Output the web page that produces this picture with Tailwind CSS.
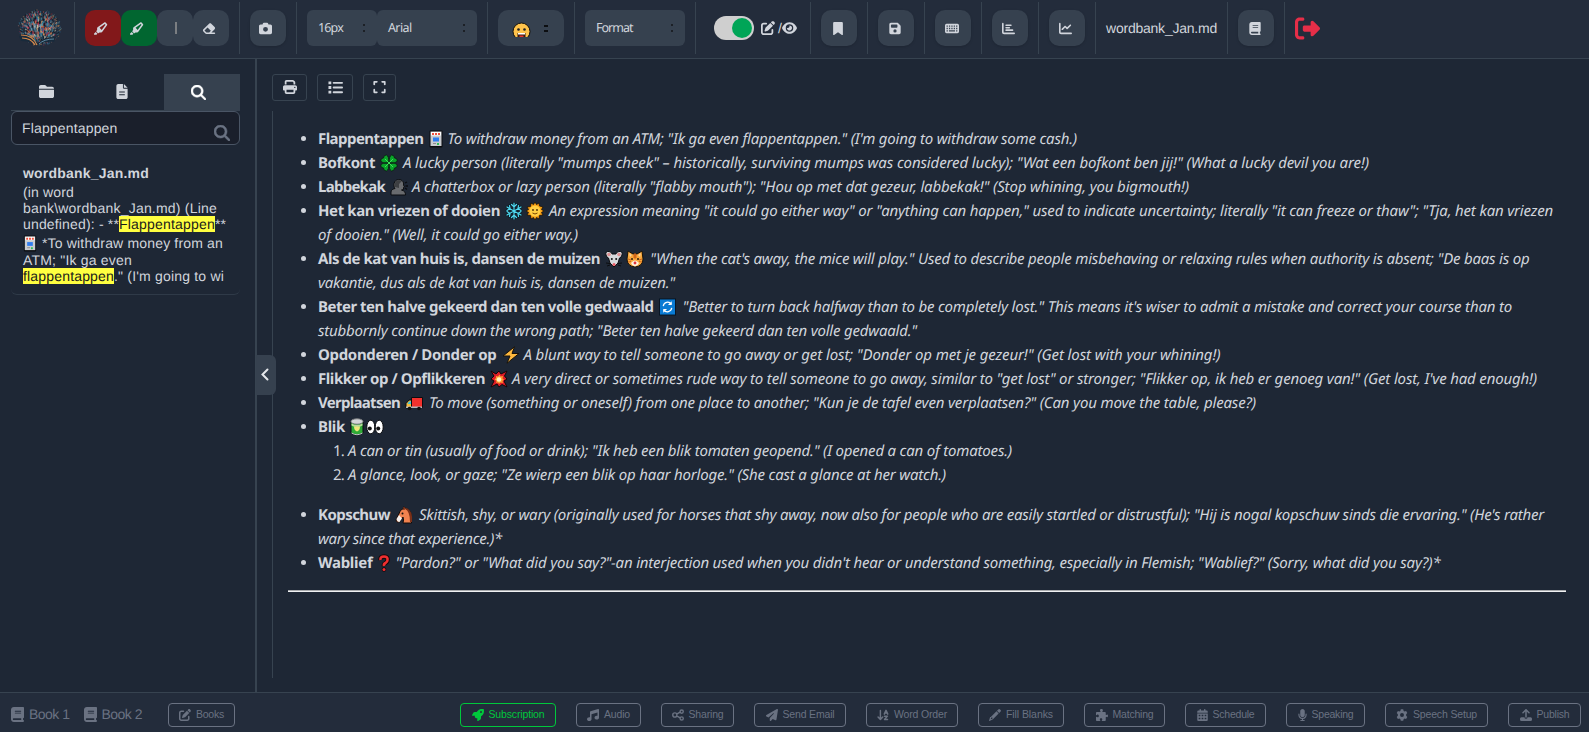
<!DOCTYPE html>
<html lang="en">
<head>
<meta charset="utf-8">
<title>wordbank_Jan.md</title>
<script src="https://cdn.jsdelivr.net/npm/@tailwindcss/browser@4"></script>
</head>
<body class="w-[1589px] h-[732px] overflow-hidden bg-[#1e2735] text-[#d1d5dc] font-['Liberation_Sans',sans-serif] [text-rendering:geometricPrecision]">
<svg class="hidden">
<symbol id="highlighter" viewBox="0 0 576 512"><path d="M315 315l158.4-215L444.1 70.6 229 229 315 315zm-187 5l0-71.7c0-15.3 7.2-29.6 19.5-38.6L420.6 8.4C428 2.9 437 0 446.2 0c11.4 0 22.4 4.5 30.5 12.6l54.8 54.8c8.1 8.1 12.6 19 12.6 30.5c0 9.2-2.9 18.2-8.4 25.6L334.4 396.5c-9 12.3-23.4 19.5-38.6 19.5H224l-25.4 25.4c-12.5 12.5-32.8 12.5-45.3 0l-50.7-50.7c-12.5-12.5-12.5-32.8 0-45.3L128 320zM7 466.3l63-63 70.6 70.6-31 31c-4.5 4.5-10.6 7-17 7H24c-13.3 0-24-10.7-24-24v-4.7c0-6.4 2.5-12.5 7-17z"/></symbol>
<symbol id="eraser" viewBox="0 0 576 512"><path d="M290.7 57.4L57.4 290.7c-25 25-25 65.5 0 90.5l80 80c12 12 28.3 18.7 45.3 18.7H512c17.7 0 32-14.3 32-32s-14.3-32-32-32H387.9L518.6 285.3c25-25 25-65.5 0-90.5L381.3 57.4c-25-25-65.5-25-90.5 0zM297.4 416H182.6l-80-80L227.3 211.3 364.7 348.7 297.4 416z"/></symbol>
<symbol id="camera" viewBox="0 0 512 512"><path d="M149.1 64.8L138.7 96H64C28.7 96 0 124.7 0 160V416c0 35.3 28.7 64 64 64H448c35.3 0 64-28.7 64-64V160c0-35.3-28.7-64-64-64H373.3L362.9 64.8C356.4 45.2 338.1 32 317.4 32H194.6c-20.7 0-39 13.2-45.5 32.8zM256 192a96 96 0 1 1 0 192 96 96 0 1 1 0-192z"/></symbol>
<symbol id="bookmark" viewBox="0 0 384 512"><path d="M0 48V487.7C0 501.1 10.9 512 24.3 512c5 0 9.9-1.5 14-4.4L192 400 345.7 507.6c4.1 2.9 9 4.4 14 4.4c13.4 0 24.3-10.9 24.3-24.3V48c0-26.5-21.5-48-48-48H48C21.5 0 0 21.5 0 48z"/></symbol>
<symbol id="floppy" viewBox="0 0 448 512"><path d="M64 32C28.7 32 0 60.7 0 96V416c0 35.3 28.7 64 64 64H384c35.3 0 64-28.7 64-64V173.3c0-17-6.7-33.3-18.7-45.3L352 50.7C340 38.7 323.7 32 306.7 32H64zm0 96c0-17.7 14.3-32 32-32H288c17.7 0 32 14.3 32 32v64c0 17.7-14.3 32-32 32H96c-17.7 0-32-14.3-32-32V128zM224 288a64 64 0 1 1 0 128 64 64 0 1 1 0-128z"/></symbol>
<symbol id="keyboard" viewBox="0 0 576 512"><path fill-rule="evenodd" d="M64 64H512a64 64 0 0 1 64 64V384a64 64 0 0 1-64 64H64a64 64 0 0 1-64-64V128a64 64 0 0 1 64-64zM64 128h52v52H64zM162 128h52v52h-52zM260 128h52v52h-52zM358 128h52v52h-52zM456 128h52v52h-52zM64 230h52v52H64zM162 230h52v52h-52zM260 230h52v52h-52zM358 230h52v52h-52zM456 230h52v52h-52zM64 332h52v52H64zM162 332h248v52H162zM456 332h52v52h-52z"/></symbol>
<symbol id="bars" viewBox="0 0 512 512"><path d="M32 32c17.7 0 32 14.3 32 32V400c0 8.800 7.200 16 16 16H480c17.700 0 32 14.300 32 32s-14.300 32-32 32H80c-44.200 0-80-35.800-80-80V64C0 46.300 14.300 32 32 32zm96 96c0-17.700 14.300-32 32-32l192 0c17.700 0 32 14.300 32 32s-14.300 32-32 32H160c-17.700 0-32-14.300-32-32zm32 64H288c17.700 0 32 14.300 32 32s-14.300 32-32 32H160c-17.700 0-32-14.300-32-32s14.300-32 32-32zm0 96H416c17.700 0 32 14.300 32 32s-14.300 32-32 32H160c-17.700 0-32-14.300-32-32s14.300-32 32-32z"/></symbol>
<symbol id="line" viewBox="0 0 512 512"><path d="M64 64c0-17.700-14.300-32-32-32S0 46.300 0 64V400c0 44.200 35.800 80 80 80H480c17.700 0 32-14.300 32-32s-14.300-32-32-32H80c-8.800 0-16-7.200-16-16V64zm406.600 86.600c12.500-12.500 12.500-32.800 0-45.300s-32.800-12.500-45.300 0L320 210.700l-57.400-57.400c-12.500-12.500-32.800-12.500-45.300 0l-112 112c-12.500 12.500-12.500 32.800 0 45.300s32.800 12.500 45.300 0L240 221.300l57.400 57.400c12.500 12.500 32.800 12.500 45.300 0l128-128z"/></symbol>
<symbol id="book" viewBox="0 0 448 512"><path d="M96 0C43 0 0 43 0 96V416c0 53 43 96 96 96H416c17.700 0 32-14.300 32-32s-14.300-32-32-32V384c17.700 0 32-14.300 32-32V32c0-17.700-14.300-32-32-32H96zm0 384H352v64H96c-17.700 0-32-14.300-32-32s14.300-32 32-32zm32-240c0-8.800 7.200-16 16-16H336c8.800 0 16 7.200 16 16s-7.200 16-16 16H144c-8.800 0-16-7.200-16-16zm16 48H336c8.800 0 16 7.200 16 16s-7.200 16-16 16H144c-8.800 0-16-7.200-16-16s7.200-16 16-16z"/></symbol>
<symbol id="exit" viewBox="0 0 512 512"><path d="M377.900 105.900L500.700 228.700c7.200 7.200 11.300 17.100 11.300 27.300s-4.100 20.100-11.300 27.300L377.900 406.100c-6.400 6.400-15 9.900-24 9.900c-18.700 0-33.900-15.200-33.900-33.900l0-62.100-128 0c-17.700 0-32-14.300-32-32l0-64c0-17.700 14.300-32 32-32l128 0 0-62.100c0-18.700 15.200-33.900 33.900-33.900c9 0 17.600 3.600 24 9.900zM160 96L96 96c-17.700 0-32 14.300-32 32l0 256c0 17.700 14.300 32 32 32l64 0c17.700 0 32 14.300 32 32s-14.300 32-32 32l-64 0c-53 0-96-43-96-96L0 128C0 75 43 32 96 32l64 0c17.700 0 32 14.300 32 32s-14.300 32-32 32z"/></symbol>
<symbol id="edit" viewBox="0 0 512 512"><path d="M471.600 21.700c-21.900-21.900-57.300-21.900-79.200 0L362.300 51.700l97.900 97.900 30.100-30.100c21.900-21.900 21.900-57.300 0-79.200L471.600 21.700zm-299.200 220c-6.100 6.100-10.800 13.600-13.500 21.900l-29.600 88.800c-2.900 8.600-.6 18.100 5.800 24.600s15.900 8.700 24.600 5.800l88.800-29.600c8.200-2.700 15.700-7.400 21.900-13.500L437.700 172.300 339.700 74.300 172.400 241.700zM96 64C43 64 0 107 0 160V416c0 53 43 96 96 96H352c53 0 96-43 96-96V320c0-17.700-14.300-32-32-32s-32 14.300-32 32v96c0 17.700-14.300 32-32 32H96c-17.700 0-32-14.300-32-32V160c0-17.700 14.300-32 32-32h96c17.700 0 32-14.300 32-32s-14.300-32-32-32H96z"/></symbol>
<symbol id="eye" viewBox="0 0 576 512"><path d="M288 32c-80.800 0-145.500 36.800-192.600 80.600C48.600 156 17.300 208 2.500 243.700c-3.300 7.900-3.300 16.700 0 24.600C17.300 304 48.600 356 95.400 399.400C142.500 443.200 207.200 480 288 480s145.500-36.800 192.600-80.600c46.800-43.500 78.100-95.400 93-131.100c3.300-7.900 3.300-16.700 0-24.600c-14.900-35.700-46.200-87.700-93-131.100C433.500 68.800 368.800 32 288 32zM144 256a144 144 0 1 1 288 0 144 144 0 1 1 -288 0zm144-64c0 35.300-28.700 64-64 64c-7.100 0-13.900-1.200-20.300-3.300c-5.500-1.800-11.900 1.600-11.700 7.400c.3 6.900 1.300 13.800 3.200 20.700c13.700 51.200 66.400 81.600 117.600 67.900s81.600-66.400 67.900-117.600c-11.100-41.500-47.800-69.400-88.600-71.100c-5.800-.2-9.200 6.100-7.400 11.700c2.100 6.400 3.300 13.200 3.300 20.300z"/></symbol>
<symbol id="folder" viewBox="0 0 512 512"><path d="M448 480H64c-35.300 0-64-28.700-64-64V192H512V416c0 35.300-28.700 64-64 64zm64-320H0V96C0 60.700 28.700 32 64 32H192c20.100 0 39.100 9.500 51.200 25.600l19.200 25.600c6 8.100 15.500 12.800 25.600 12.800H448c35.300 0 64 28.700 64 64z"/></symbol>
<symbol id="file" viewBox="0 0 384 512"><path fill-rule="evenodd" d="M64 0C28.700 0 0 28.700 0 64V448c0 35.300 28.700 64 64 64H320c35.300 0 64-28.700 64-64V160H256c-17.700 0-32-14.300-32-32V0H64zM256 0V128H384L256 0zM96 256H288v36H96zM96 346H288v36H96z"/></symbol>
<symbol id="search" viewBox="0 0 512 512"><path stroke="currentColor" stroke-width="18" d="M416 208c0 45.900-14.900 88.300-40 122.700L502.600 457.400c12.500 12.500 12.500 32.800 0 45.300s-32.800 12.500-45.300 0L330.700 376c-34.400 25.200-76.800 40-122.700 40C93.100 416 0 322.900 0 208S93.100 0 208 0S416 93.100 416 208zM208 352a144 144 0 1 0 0-288 144 144 0 1 0 0 288z"/></symbol>
<symbol id="print" viewBox="0 0 512 512"><path d="M128 0C92.700 0 64 28.700 64 64v96h64V64H354.700L384 93.300V160h64V93.300c0-17-6.700-33.300-18.700-45.300L400 18.700C388 6.700 371.700 0 354.700 0H128zM384 352v96H128V352H384zm64 32h32c17.700 0 32-14.300 32-32V256c0-35.300-28.700-64-64-64H64c-35.300 0-64 28.700-64 64v96c0 17.700 14.300 32 32 32H64v64c0 35.300 28.700 64 64 64H384c35.300 0 64-28.700 64-64V384zM432 248a24 24 0 1 1 0 48 24 24 0 1 1 0-48z"/></symbol>
<symbol id="list" viewBox="0 0 512 512"><path d="M16 48h96v96H16zM16 208h96v96H16zM16 368h96v96H16zM192 64H480a32 32 0 0 1 0 64H192a32 32 0 0 1 0-64zM192 224H480a32 32 0 0 1 0 64H192a32 32 0 0 1 0-64zM192 384H480a32 32 0 0 1 0 64H192a32 32 0 0 1 0-64z"/></symbol>
<symbol id="expand" viewBox="0 0 448 512"><path d="M32 32C14.300 32 0 46.300 0 64v96c0 17.700 14.300 32 32 32s32-14.300 32-32V96h64c17.700 0 32-14.300 32-32s-14.300-32-32-32H32zM64 352c0-17.700-14.300-32-32-32s-32 14.300-32 32v96c0 17.700 14.300 32 32 32h96c17.700 0 32-14.300 32-32s-14.300-32-32-32H64V352zM320 32c-17.700 0-32 14.300-32 32s14.300 32 32 32h64v64c0 17.700 14.300 32 32 32s32-14.300 32-32V64c0-17.700-14.300-32-32-32H320zM448 352c0-17.700-14.300-32-32-32s-32 14.300-32 32v64H320c-17.700 0-32 14.300-32 32s14.300 32 32 32h96c17.700 0 32-14.300 32-32V352z"/></symbol>
<symbol id="rocket" viewBox="0 0 512 512"><path d="M156.600 384.900L125.700 354c-8.500-8.500-11.500-20.800-7.700-32.200c3-8.900 7-20.500 11.800-33.800L24 288c-8.600 0-16.600-4.600-20.900-12.100s-4.200-16.700 .2-24.100l52.500-88.500c13-21.900 36.500-35.300 61.900-35.300l82.300 0c2.400-4 4.800-7.700 7.200-11.300C289.100-4.100 411.100-8.100 483.900 5.300c11.600 2.100 20.600 11.200 22.800 22.800c13.400 72.900 9.300 194.800-111.400 276.700c-3.500 2.400-7.300 4.800-11.300 7.200v82.300c0 25.400-13.400 49-35.300 61.900l-88.500 52.500c-7.400 4.400-16.600 4.500-24.100 .2s-12.100-12.200-12.100-20.900V380.800c-14.100 4.900-26.400 8.900-35.700 11.900c-11.200 3.600-23.400 .5-31.800-7.800zM384 168a40 40 0 1 0 0-80 40 40 0 1 0 0 80z"/></symbol>
<symbol id="music" viewBox="0 0 512 512"><path d="M499.100 6.300c8.100 6 12.900 15.600 12.900 25.700V368c0 44.200-43 80-96 80s-96-35.800-96-80s43-80 96-80c11.200 0 22 1.600 32 4.600V147L192 223.800V432c0 44.200-43 80-96 80s-96-35.800-96-80s43-80 96-80c11.200 0 22 1.600 32 4.600V128c0-14.100 9.300-26.600 22.800-30.700l320-96c9.700-2.900 20.200-1.100 28.300 5z"/></symbol>
<symbol id="share" viewBox="0 0 512 512"><path fill="none" stroke="currentColor" stroke-width="60" d="M200 220L345 130M200 292L345 382M32 256a90 90 0 1 0 180 0a90 90 0 1 0-180 0M345 110a68 68 0 1 0 136 0a68 68 0 1 0-136 0M345 402a68 68 0 1 0 136 0a68 68 0 1 0-136 0"/></symbol>
<symbol id="plane" viewBox="0 0 512 512"><path d="M498.100 5.600c10.100 7 15.400 19.100 13.500 31.200l-64 416c-1.500 9.700-7.400 18.200-16 23s-18.900 5.400-28 1.600L284 427.700l-68.500 74.100c-8.900 9.700-22.900 12.900-35.200 8.100S160 493.200 160 480V396.400c0-4 1.500-7.800 4.200-10.700L331.800 202.800c5.800-6.300 5.600-16-.4-22s-15.700-6.400-22-.7L106 360.800 17.700 316.600C7.100 311.300 .3 300.700 0 288.900s5.900-22.800 16.100-28.700l448-256c10.700-6.100 23.900-5.500 34 1.400z"/></symbol>
<symbol id="sort" viewBox="0 0 512 512"><path fill="none" stroke="currentColor" stroke-width="62" stroke-linecap="round" stroke-linejoin="round" d="M145 60V450M45 345L145 450L245 345M310 220L385 55L460 220M340 170H430M320 305H445L320 450H450"/></symbol>
<symbol id="pencil" viewBox="0 0 512 512"><path d="M410 13a48 48 0 0 1 60 6l24 24a48 48 0 0 1 0 68l-60 60L341 78zM318 101L411 194L190 415L170 435L20 508Q0 512 4 490L48 345L78 341zM100 365L70 440L145 412V365z"/></symbol>
<symbol id="puzzle" viewBox="0 0 512 512"><path d="M192 105c0-16-22-25-22-52C170 22 198 0 232 0s62 22 62 53c0 27-22 36-22 52 0 13 10 23 23 23h89c18 0 32 14 32 32v74c0 13 10 23 23 23 16 0 22-22 40-22 20 0 33 26 33 57s-13 60-33 60c-18 0-24-22-40-22-13 0-23 10-23 23v127c0 18-14 32-32 32H270c-13 0-23-10-23-23 0-16 24-24 24-48 0-28-25-49-55-49s-56 21-56 49c0 24 24 32 24 48 0 13-10 23-23 23H32c-18 0-32-14-32-32V352c0-13 10-23 23-23 16 0 24 24 48 24 28 0 49-27 49-57s-21-57-49-57c-24 0-32 24-48 24-13 0-23-10-23-23v-80c0-18 14-32 32-32h137c13 0 23-10 23-23z"/></symbol>
<symbol id="calendar" viewBox="0 0 448 512"><path fill-rule="evenodd" d="M96 32a32 32 0 0 1 64 0V64H288V32a32 32 0 0 1 64 0V64h48a48 48 0 0 1 48 48v48H0V112a48 48 0 0 1 48-48H96zM0 192H448V464a48 48 0 0 1-48 48H48a48 48 0 0 1-48-48zM60 245h72v60H60zM188 245h72v60h-72zM316 245h72v60h-72zM60 375h72v60H60zM188 375h72v60h-72zM316 375h72v60h-72z"/></symbol>
<symbol id="mic" viewBox="0 0 384 512"><path d="M192 0C139 0 96 43 96 96V256c0 53 43 96 96 96s96-43 96-96V96c0-53-43-96-96-96zM64 216c0-13.300-10.700-24-24-24s-24 10.700-24 24v40c0 89.100 66.200 162.700 152 174.400V464H120c-13.300 0-24 10.700-24 24s10.700 24 24 24H264c13.300 0 24-10.700 24-24s-10.700-24-24-24H216V430.400c85.800-11.700 152-85.300 152-174.400V216c0-13.300-10.700-24-24-24s-24 10.700-24 24v40c0 70.700-57.300 128-128 128s-128-57.300-128-128V216z"/></symbol>
<symbol id="gear" viewBox="0 0 512 512"><path fill-rule="evenodd" d="M205 12h102l18 68 38 22 68-19 51 89-49 50v68l49 50-51 89-68-19-38 22-18 68H205l-18-68-38-22-68 19-51-89 49-50v-68l-49-50 51-89 68 19 38-22zM256 172a84 84 0 1 0 0 168a84 84 0 1 0 0-168z"/></symbol>
<symbol id="upload" viewBox="0 0 512 512"><path d="M288 109V336a32 32 0 0 1-64 0V109l-73 74a32 32 0 0 1-46-46L233 9a32 32 0 0 1 46 0L407 137a32 32 0 0 1-46 46zM64 352H192a64 64 0 0 0 128 0H448a64 64 0 0 1 64 64v32a64 64 0 0 1-64 64H64a64 64 0 0 1-64-64v-32a64 64 0 0 1 64-64z"/></symbol>
<symbol id="atm" viewBox="0 0 14 18"><rect x=".5" y=".5" width="13" height="17" rx="1" fill="#0b0d10"/><rect x="1.500" y="1.500" width="11" height="14.500" fill="#c9ccd0"/><rect x="2" y="2" width="10" height="3.500" fill="#fff"/><path d="M3 3h2v2H3zM6 3h2v2H6zM9 3h2v2H9z" fill="#f0503c"/><rect x="4" y="7.500" width="6" height="4" fill="#2f7df0"/><path d="M4 13h3v1H4z" fill="#8a8a90"/><path d="M8 13h2v2H8z" fill="#2ebd59"/></symbol>
<symbol id="clover" viewBox="0 0 18 18"><g fill="#0aa329" stroke="#0b1511" stroke-width=".8"><path d="M9 9Q3 10 1 7.500Q0 4.500 3.500 4Q3.500 1 6.500 1Q9 2 9 9zM9 9Q15 10 17 7.500Q18 4.500 14.500 4Q14.500 1 11.500 1Q9 2 9 9zM9 9Q3 8 1 10.500Q0 13.500 3.500 14Q3.500 17 6.500 17Q9 16 9 9zM9 9Q15 8 17 10.500Q18 13.500 14.500 14Q14.500 17 11.500 17Q9 16 9 9z"/></g><path d="M5 5l8 8M13 5L5 13" stroke="#3fe05a" stroke-width="1"/></symbol>
<symbol id="speak" viewBox="0 0 18 18"><path d="M1 17v-3c0-2 2-3 4-3.500C3 8 3.500 2 8.500 1.500c4 0 5.500 3 5 5.500l1 2-1 .5v2l-2 .5c3 1 4 2 4 5z" fill="#696b6e" stroke="#0b0d10"/><path d="M5 9C4 5 6 2 9 2L12 3 9 6v4z" fill="#3d3f42"/><path d="M15 5l2-1M15.500 8H18M15 10l2 1.500" stroke="#0b0d10" stroke-width="1.300"/></symbol>
<symbol id="snow" viewBox="0 0 18 18"><g fill="none" stroke-linecap="round"><path d="M9 1v16M2 5l14 8M16 5L2 13M6.500 2.500L9 5l2.500-2.500M6.500 15.500L9 13l2.500 2.500M2 8.500l3-2-.5-3M16 8.500l-3-2 .5-3M2 9.500l3 2-.5 3M16 9.500l-3 2 .5 3" stroke="#0b1c26" stroke-width="2.600"/><path d="M9 1v16M2 5l14 8M16 5L2 13M6.500 2.500L9 5l2.500-2.500M6.500 15.500L9 13l2.500 2.500M2 8.500l3-2-.5-3M16 8.500l-3-2 .5-3M2 9.500l3 2-.5 3M16 9.500l-3 2 .5 3" stroke="#50d8f0" stroke-width="1.200"/></g></symbol>
<symbol id="sun" viewBox="0 0 18 18"><path d="M9 0l1.500 2.500L13 1l.5 3L17 5l-1.500 2.500L18 9l-2.500 1.500L17 13l-3.500.5L13 17l-2.500-1.500L9 18l-1.500-2.500L5 17l-.5-3.500L1 13l1.500-2.500L0 9l2.500-1.500L1 5l3.500-.5L5 1l2.500 1.500z" fill="#f59c14" stroke="#17120a" stroke-width=".8"/><circle cx="9" cy="9" r="5.500" fill="#ffcf43"/><circle cx="7" cy="8" r=".9" fill="#4a2b00"/><circle cx="11" cy="8" r=".9" fill="#4a2b00"/><path d="M6.500 11q2.500 2 5 0" stroke="#7a4500" fill="none"/></symbol>
<symbol id="mouse" viewBox="0 0 18 18"><path d="M1 5Q0 1 4 1.500Q7 2 7 4h4Q11 2 14 1.500Q18 1 17 5Q16 8 14.500 8L13 13l-4 4-4-4L3.500 8Q2 8 1 5z" fill="#d7d9dc" stroke="#0b0d10"/><circle cx="4" cy="4.500" r="1.800" fill="#dd8f91"/><circle cx="14" cy="4.500" r="1.800" fill="#dd8f91"/><circle cx="6.800" cy="9" r="1" fill="#111"/><circle cx="11.200" cy="9" r="1" fill="#111"/><circle cx="9" cy="14.500" r="1.500" fill="#e85a64"/><path d="M1 13l4 .5M2 16l3-1M17 13l-4 .5M16 16l-3-1" stroke="#0b0d10"/></symbol>
<symbol id="cat" viewBox="0 0 18 18"><path d="M2 1l5 3h4l5-3 1 8q0 7-8 8Q1 16 1 9z" fill="#f9a83c" stroke="#17120a"/><path d="M3 3l3 2-2 2zM15 3l-3 2 2 2z" fill="#f9d29a"/><path d="M8 4h2v4H8zM2 9l3 1M2 12l3-.5M16 9l-3 1M16 12l-3-.5" stroke="#d0661a" fill="#d0661a"/><path d="M5 13q4-5 8 0-1 3-4 3.500Q6 16 5 13z" fill="#fff3df"/><circle cx="6" cy="9" r="1" fill="#2b1b0a"/><circle cx="12" cy="9" r="1" fill="#2b1b0a"/><circle cx="9" cy="13" r="1.400" fill="#e0353c"/></symbol>
<symbol id="cycle" viewBox="0 0 18 18"><rect x=".5" y=".5" width="17" height="17" fill="#0a7bd4" stroke="#07131f"/><path d="M4.500 8a4.700 4.700 0 0 1 8.500-2M13.500 10a4.700 4.700 0 0 1-8.500 2" fill="none" stroke="#fff" stroke-width="1.300"/><path d="M13.500 3v4h-4zM4.500 15v-4h4z" fill="#fff"/></symbol>
<symbol id="bolt" viewBox="0 0 18 18"><path d="M12.500 .8L1 10H8l-3 7.200L17 7.500H10z" fill="#fdb73e" stroke="#17120a"/></symbol>
<symbol id="boom" viewBox="0 0 18 18"><path d="M1 1l5 3 3-3 2 3 6-3-2.500 5L17 9l-3 2 3 6-5-2.500L9 17l-2-3-6 3 3-6-3-2 3-3z" fill="#e01d27" stroke="#120608"/><path d="M6 6l2 .5 1.500-2L10.500 6.500l2.500-.5-.5 2.500 1.500 1-1.500 1.500.5 2-2.500-.5L9 14l-1-1.500-2 .5.5-2-2-1.500L6 8z" fill="#ff9f31"/><circle cx="9" cy="9.500" r="2.300" fill="#fff4c4"/></symbol>
<symbol id="truck" viewBox="0 0 18 18"><path d="M6.500 3.500h11v10h-11z" fill="#f2312d" stroke="#0b0d10"/><path d="M6.500 6H4L1 9.500V14h5.500z" fill="#f6b73c" stroke="#0b0d10"/><path d="M4 7.500H6V10H2.500z" fill="#3bc6de"/><path d="M1 12.500h16V14H1z" fill="#b4b7ba"/><circle cx="4.500" cy="14.500" r="1.800" fill="#111"/><circle cx="14" cy="14.500" r="1.800" fill="#111"/></symbol>
<symbol id="can" viewBox="0 0 14 18"><path d="M1 3v12q6 4 12 0V3z" fill="#2faa36" stroke="#0b0d10"/><ellipse cx="7" cy="3.500" rx="6" ry="2.700" fill="#d4d6d8" stroke="#77797c"/><path d="M1.500 5.500q5.500 3 11 0v2q-5.500 3-11 0z" fill="#b8dc9b"/><path d="M4 8.500h6q0 4-3 5-3-1-3-5z" fill="#f0e77a"/><path d="M1.500 15q5.500 3.500 11 0" stroke="#c2c5c8" fill="none"/></symbol>
<symbol id="eyes" viewBox="0 0 18 18"><ellipse cx="4.800" cy="9" rx="4" ry="6.800" fill="#fff" stroke="#0b0d10"/><ellipse cx="13.200" cy="9" rx="4" ry="6.800" fill="#fff" stroke="#0b0d10"/><circle cx="3.800" cy="10.500" r="2" fill="#111"/><circle cx="12.200" cy="10.500" r="2" fill="#111"/></symbol>
<symbol id="horse" viewBox="0 0 18 18"><path d="M9 .8l2 2q5.500 1 5.500 9V17H8q1-3 0-6l-3.500 5q-3 1-3.500-2L5 5.500Q6 3 9 2.500z" fill="#f0824f" stroke="#120a08"/><path d="M10 3q5 2 5 13h2q1-12-6-14z" fill="#7a3018"/><path d="M1.500 13L4 9l3 3.500-2.500 3.500q-2.500 0-3-3z" fill="#f4efec"/><path d="M9 1v3" stroke="#7a3018" stroke-width="1.500"/><circle cx="7.500" cy="7.500" r="1" fill="#111"/></symbol>
<symbol id="quest" viewBox="0 0 12 18"><path d="M2.500 6Q2 2.500 6 2.500T9.500 6Q9.500 8 7.500 9T6 12" fill="none" stroke="#16080a" stroke-width="4.400"/><circle cx="6" cy="15.500" r="2.200" fill="#16080a"/><path d="M2.500 6Q2 2.500 6 2.500T9.500 6Q9.500 8 7.500 9T6 12" fill="none" stroke="#f02f30" stroke-width="2.600"/><circle cx="6" cy="15.500" r="1.500" fill="#f02f30"/></symbol>
</svg>

<div class="flex flex-col h-full">
<header class="flex items-start h-[59px] shrink-0 bg-[#232c3b] border-b border-[#374350] pt-[2px] [&>i]:w-px [&>i]:h-[52px] [&>i]:mx-[10px] [&>i]:bg-[#374350] [&>i]:shrink-0 [&_.b]:w-9 [&_.b]:h-9 [&_.b]:rounded-[10px] [&_.b]:flex [&_.b]:items-center [&_.b]:justify-center [&_svg]:fill-current [&>div]:shrink-0">
  <div class="w-[64px] pl-[16px] pt-[5px]"><svg id="logo" class="w-[48px] h-[42px]" viewBox="0 0 48 42"></svg></div><i></i>
  <div class="flex pt-2">
    <button class="b bg-[#82181a] pr-1"><svg class="w-[14px] h-[13px]"><use href="#highlighter"/></svg></button>
    <button class="b bg-[#016630] pr-1"><svg class="w-[14px] h-[13px]"><use href="#highlighter"/></svg></button>
    <button class="b bg-[#36414f]"><span class="w-[2px] h-3 bg-[#7b7e82] ml-px"></span></button>
    <button class="b bg-[#36414f] pr-[5px]"><svg class="w-[14px] h-[13px]"><use href="#eraser"/></svg></button>
  </div><i></i>
  <div class="pt-2"><button class="b bg-[#36414f] pr-[5px] shadow-sm"><svg class="w-[13px] h-[13px]"><use href="#camera"/></svg></button></div><i></i>
  <div class="flex pt-2 text-[12.500px] font-['Noto_Sans',sans-serif]">
    <div class="w-[70px] h-9 rounded-md bg-[#36414f] flex items-center justify-between pl-[11px] pr-3"><span data-w="25">16px</span><span class="flex flex-col gap-1"><b class="size-[2px] bg-[#1c2026]"></b><b class="size-[2px] bg-[#1c2026]"></b></span></div>
    <div class="w-[100px] h-9 rounded-md bg-[#36414f] flex items-center justify-between pl-[11px] pr-3"><span data-w="23.500">Arial</span><span class="flex flex-col gap-1"><b class="size-[2px] bg-[#1c2026]"></b><b class="size-[2px] bg-[#1c2026]"></b></span></div>
  </div><i></i>
  <div class="pt-2"><div class="w-[66px] h-9 rounded-[10px] bg-[#36414f] flex items-center justify-between pl-[14px] pr-4">
    <svg class="w-[19px] h-[15px] mt-[3px] shrink-0" viewBox="0 0 19 15"><circle cx="9.500" cy="9.500" r="8.500" fill="#ffc34b" stroke="#14110c"/><circle cx="6.500" cy="7.500" r="1.300" fill="#222"/><circle cx="12.500" cy="7.500" r="1.300" fill="#222"/><path d="M5.500 11h8v4h-8z" fill="#3a1c10"/><path d="M6 11h7v1.500H6z" fill="#fff"/><path d="M7.500 13.500h4V15h-4z" fill="#e8362c"/></svg>
    <span class="flex flex-col gap-[3px] items-center"><b class="w-1 h-[2px] bg-[#0c0e11]"></b><b class="w-1 h-[2px] bg-[#0c0e11]"></b></span></div></div><i></i>
  <div class="pt-2"><div class="w-[100px] h-9 rounded-md bg-[#36414f] flex items-center justify-between pl-[11px] pr-3 text-[12.500px] font-['Noto_Sans',sans-serif]"><span data-w="36.500">Format</span><span class="flex flex-col gap-1"><b class="size-[2px] bg-[#1c2026]"></b><b class="size-[2px] bg-[#1c2026]"></b></span></div></div><i class="!mr-[18px]"></i>
  <div class="flex items-center h-[52px] w-[87px]"><span class="w-10 h-6 rounded-full bg-[#cfcfcf] flex items-center justify-end pr-[2px]"><span class="size-5 rounded-full bg-[#00a557]"></span></span><svg class="w-[14px] h-[14px] ml-[7px]"><use href="#edit"/></svg><span class="text-[14px] ml-[3px]">/</span><svg class="w-[15px] h-[14px]"><use href="#eye"/></svg></div><i class="!ml-[9px]"></i>
  <div class="pt-2"><button class="b bg-[#36414f] pr-[3px] shadow-sm"><svg class="w-[10px] h-[13px]"><use href="#bookmark"/></svg></button></div><i></i>
  <div class="pt-2"><button class="b bg-[#36414f] pr-[3px] shadow-sm"><svg class="w-[12px] h-[13px]"><use href="#floppy"/></svg></button></div><i></i>
  <div class="pt-2"><button class="b bg-[#36414f] pr-[3px] shadow-sm"><svg class="w-[14px] h-[13px]"><use href="#keyboard"/></svg></button></div><i></i>
  <div class="pt-2"><button class="b bg-[#36414f] pr-[3px] shadow-sm"><svg class="w-[13px] h-[13px]"><use href="#bars"/></svg></button></div><i></i>
  <div class="pt-2"><button class="b bg-[#36414f] pr-[3px] shadow-sm"><svg class="w-[13px] h-[13px]"><use href="#line"/></svg></button></div><i></i>
  <div class="w-[111px] h-[52px] flex items-center text-[14px]"><span data-w="111">wordbank_Jan.md</span></div><i></i>
  <div class="pt-2"><button class="b bg-[#36414f] pr-[3px] shadow-sm"><svg class="w-[12px] h-[13px]"><use href="#book"/></svg></button></div><i></i>
  <div class="h-[52px] flex items-center text-[#e62e48]"><svg class="w-[25px] h-[25px]"><use href="#exit"/></svg></div>
</header>

<div class="flex flex-1 min-h-0 relative">
  <aside class="w-[257px] border-r-2 border-[#374350] pl-[11px] pr-[15px] pt-[15px] shrink-0">
    <div class="flex h-[37px] border-b border-[#374350] [&>span]:w-1/3 [&>span]:flex [&>span]:items-center [&>span]:justify-center [&>span]:pb-px [&_svg]:fill-current">
      <span class="pr-[5px]"><svg class="size-[15px]"><use href="#folder"/></svg></span><span class="pr-[6px]"><svg class="w-[12px] h-[15px]"><use href="#file"/></svg></span><span class="bg-[#36414f] text-white pr-[6px] -mb-px"><svg class="size-[15px] overflow-visible"><use href="#search"/></svg></span>
    </div>
    <div class="h-[34px] rounded-md border border-[#4a5565] bg-[#1a1f2b] flex items-center justify-between pl-[10px] pr-[9px] text-[14px]"><span data-w="95.500">Flappentappen</span><svg class="size-[16px] mt-2.5 text-[#6a7282] fill-current"><use href="#search"/></svg></div>
    <div class="mt-[12px] h-[138px] border-b border-[#2f3a48] rounded-md pl-3 pt-[2px] text-[14px] leading-4 whitespace-nowrap">
      <div class="font-bold mt-1.5 mb-[3px]"><span data-w="126">wordbank_Jan.md</span></div>
      <div><span data-w="51">(in word</span></div>
      <div><span data-w="194">bank\wordbank_Jan.md) (Line</span></div>
      <div class="flex"><span data-w="96">undefined): - **</span><mark class="bg-[#ffff40] text-[#1a1a1a]"><span data-w="96">Flappentappen</span></mark><span>**</span></div>
      <div class="flex items-center h-[22px]"><svg class="w-[14px] h-[17px]"><use href="#atm"/></svg><span data-w="181" class="ml-[5px]">*To withdraw money from an</span></div>
      <div class="-mt-[2px]"><span data-w="109">ATM; "Ik ga even</span></div>
      <div class="flex"><mark class="bg-[#ffff40] text-[#1a1a1a]"><span data-w="91">flappentappen</span></mark><span data-w="110">." (I'm going to wi</span></div>
    </div>
  </aside>
  <button class="absolute left-[256px] top-[296px] w-5 h-10 rounded-r-md bg-[#36414f] flex items-center justify-center pr-[2px] pb-px"><svg class="w-[8px] h-[13px]" viewBox="0 0 8 13"><path d="M6.500 1.500L1.500 6.500L6.500 11.500" fill="none" stroke="#e5e7eb" stroke-width="2" stroke-linecap="round"/></svg></button>

  <main class="flex-1 pl-[15px] pt-[15px] min-w-0">
    <div class="flex gap-[11px] [&>button]:h-[27px] [&>button]:border [&>button]:border-[#374350] [&>button]:rounded-[3px] [&>button]:flex [&>button]:items-center [&>button]:justify-center [&>button]:pb-px [&_svg]:fill-current">
      <button class="w-[35px]"><svg class="size-[14px]"><use href="#print"/></svg></button><button class="w-[36px] -ml-px"><svg class="size-[15px]"><use href="#list"/></svg></button><button class="w-[33px] -ml-px"><svg class="w-[13px] h-[14px]"><use href="#expand"/></svg></button>
    </div>
    <div class="mt-[10px] h-[567px] border-l border-[#374350] pl-[15px] pt-[16px] font-['Noto_Sans',sans-serif] text-[15px] leading-6">
      <ul class="whitespace-nowrap pl-[30px] w-[1278px] [&>li]:relative [&>li]:before:absolute [&>li]:before:-left-[17px] [&>li]:before:top-[9px] [&>li]:before:size-[5px] [&>li]:before:rounded-full [&>li]:before:bg-[#d1d5dc] [&_p]:flex [&_p]:h-6 [&_p]:items-center [&_b]:mr-[5px] [&_svg]:w-[18px] [&_svg]:h-[18px] [&_svg]:mr-[4px] [&_svg]:shrink-0">
        <li><p><b data-w="105.500">Flappentappen</b><svg class="!w-[14px] !mr-[5px]"><use href="#atm"/></svg><em data-w="629.500">To withdraw money from an ATM; "Ik ga even flappentappen." (I'm going to withdraw some cash.)</em></p></li>
        <li><p><b data-w="57">Bofkont</b><svg class="!mr-[5px]"><use href="#clover"/></svg><em data-w="966">A lucky person (literally "mumps cheek" – historically, surviving mumps was considered lucky); "Wat een bofkont ben jij!" (What a lucky devil you are!)</em></p></li>
        <li><p><b data-w="67">Labbekak</b><svg><use href="#speak"/></svg><em data-w="777">A chatterbox or lazy person (literally "flabby mouth"); "Hou op met dat gezeur, labbekak!" (Stop whining, you bigmouth!)</em></p></li>
        <li><p><b data-w="182">Het kan vriezen of dooien</b><svg class="!mr-[3px]"><use href="#snow"/></svg><svg class="!mr-[5px]"><use href="#sun"/></svg><em data-w="1004">An expression meaning "it could go either way" or "anything can happen," used to indicate uncertainty; literally "it can freeze or thaw"; "Tja, het kan vriezen</em></p>
          <p><em data-w="260">of dooien." (Well, it could go either way.)</em></p></li>
        <li><p><b data-w="282">Als de kat van huis is, dansen de muizen</b><svg class="!mr-[3px]"><use href="#mouse"/></svg><svg class="!mr-[6px]"><use href="#cat"/></svg><em data-w="879.500">"When the cat's away, the mice will play." Used to describe people misbehaving or relaxing rules when authority is absent; "De baas is op</em></p>
          <p><em data-w="357">vakantie, dus als de kat van huis is, dansen de muizen."</em></p></li>
        <li><p><b data-w="335.500">Beter ten halve gekeerd dan ten volle gedwaald</b><svg class="!mr-[7px] !w-[17px]"><use href="#cycle"/></svg><em data-w="829.500">"Better to turn back halfway than to be completely lost." This means it's wiser to admit a mistake and correct your course than to</em></p>
          <p><em data-w="599">stubbornly continue down the wrong path; "Beter ten halve gekeerd dan ten volle gedwaald."</em></p></li>
        <li><p><b data-w="178.500">Opdonderen / Donder op</b><svg><use href="#bolt"/></svg><em data-w="697">A blunt way to tell someone to go away or get lost; "Donder op met je gezeur!" (Get lost with your whining!)</em></p></li>
        <li><p><b data-w="167">Flikker op / Opflikkeren</b><svg><use href="#boom"/></svg><em data-w="1025">A very direct or sometimes rude way to tell someone to go away, similar to "get lost" or stronger; "Flikker op, ik heb er genoeg van!" (Get lost, I've had enough!)</em></p></li>
        <li><p><b data-w="82">Verplaatsen</b><svg class="!mr-[6px]"><use href="#truck"/></svg><em data-w="827">To move (something or oneself) from one place to another; "Kun je de tafel even verplaatsen?" (Can you move the table, please?)</em></p></li>
        <li><p><b data-w="27">Blik</b><svg class="!w-[14px] !mr-[2px]"><use href="#can"/></svg><svg><use href="#eyes"/></svg></p>
          <ol class="pl-[15px]"><li><p><span data-w="11" class="mr-[4px]">1.</span><em data-w="664">A can or tin (usually of food or drink); "Ik heb een blik tomaten geopend." (I opened a can of tomatoes.)</em></p></li>
          <li><p><span data-w="11" class="mr-[4px]">2.</span><em data-w="598">A glance, look, or gaze; "Ze wierp een blik op haar horloge." (She cast a glance at her watch.)</em></p></li></ol></li>
        <li class="mt-4"><p><b data-w="72">Kopschuw</b><svg class="!mr-[6px]"><use href="#horse"/></svg><em data-w="1125">Skittish, shy, or wary (originally used for horses that shy away, now also for people who are easily startled or distrustful); "Hij is nogal kopschuw sinds die ervaring." (He's rather</em></p>
          <p><em data-w="184">wary since that experience.)*</em></p></li>
        <li><p><b data-w="54.500">Wablief</b><svg class="!w-[12px] !mr-[6px]"><use href="#quest"/></svg><em data-w="1045">"Pardon?" or "What did you say?"-an interjection used when you didn't hear or understand something, especially in Flemish; "Wablief?" (Sorry, what did you say?)*</em></p></li>
      </ul>
      <div class="mt-[15px] h-[2px] w-[1278px] bg-[#f0f1f2] border-t border-[#a9abae]"></div>
    </div>
  </main>
</div>

<footer class="h-10 shrink-0 bg-[#232c3b] border-t border-[#374350] flex items-center pt-[4px] text-[#6a7282] text-[10.500px] [&_svg]:fill-current [&_svg]:shrink-0">
  <div class="flex items-center pl-[11px] text-[14px]"><svg class="w-[13px] h-[15px] mr-[5px]"><use href="#book"/></svg><span data-w="40.500">Book 1</span><svg class="w-[13px] h-[15px] ml-[14px] mr-[5px]"><use href="#book"/></svg><span data-w="40.500">Book 2</span></div>
  <button class="ml-[26px] w-[67px] h-6 border border-[#6a7282] rounded flex items-center pl-[10px]"><svg class="size-3 mr-[5px]"><use href="#edit"/></svg><span data-w="28">Books</span></button>
  <div class="flex gap-5 ml-auto pr-2 [&>button]:h-6 [&>button]:border [&>button]:border-current [&>button]:rounded [&>button]:flex [&>button]:items-center [&>button]:justify-center [&>button]:gap-[5px] [&_svg]:size-3">
    <button class="w-[96px] text-[#00c83c]"><svg><use href="#rocket"/></svg><span data-w="56">Subscription</span></button>
    <button class="w-[65px]"><svg><use href="#music"/></svg><span data-w="26">Audio</span></button>
    <button class="w-[73px]"><svg><use href="#share"/></svg><span data-w="35">Sharing</span></button>
    <button class="w-[92px]"><svg><use href="#plane"/></svg><span data-w="52">Send Email</span></button>
    <button class="w-[92px]"><svg><use href="#sort"/></svg><span data-w="53">Word Order</span></button>
    <button class="w-[86px]"><svg><use href="#pencil"/></svg><span data-w="47">Fill Blanks</span></button>
    <button class="w-[81px]"><svg><use href="#puzzle"/></svg><span data-w="41">Matching</span></button>
    <button class="w-[81px]"><svg class="!w-[11px]"><use href="#calendar"/></svg><span data-w="42">Schedule</span></button>
    <button class="w-[79px]"><svg class="!w-[9px]"><use href="#mic"/></svg><span data-w="42">Speaking</span></button>
    <button class="w-[103px]"><svg><use href="#gear"/></svg><span data-w="64">Speech Setup</span></button>
    <button class="w-[73px]"><svg><use href="#upload"/></svg><span data-w="33">Publish</span></button>
  </div>
</footer>
</div>
<script>
function fitLabels() {
  document.querySelectorAll('[data-w]').forEach(el => {
    el.style.display = 'inline-block';
    el.style.whiteSpace = 'pre';
    el.style.flexShrink = 0;
    const w = parseFloat(el.dataset.w);
    let spacing = parseFloat(el.style.letterSpacing) || 0;
    for (let k = 0; k < 4; k++) {
      spacing += (w - el.getBoundingClientRect().width) / el.textContent.length;
      el.style.letterSpacing = spacing + 'px';
    }
  });
}
fitLabels();
document.fonts.ready.then(fitLabels);
addEventListener('load', () => { fitLabels(); requestAnimationFrame(fitLabels); });
// Logo: an open book with bursting colour specks
const colors = ['#3a8fb0', '#c9543f', '#d9955a', '#7d97a6', '#b8284f', '#2c618c', '#cfc0a4', '#44606f', '#101722', '#1a3347', '#2f7fa0', '#101722'];
let seed = 7;
const rnd = () => (seed = (seed * 16807) % 2147483647) / 2147483647;
let art = '';
for (let k = 0; k < 800; k++) {
  const a = rnd() * 6.283, r = Math.pow(rnd(), .6);
  const x = 23.5 + Math.cos(a) * r * 22, y = 20 + Math.sin(a) * r * 18;
  const s = (1.2 - r * .7) * 3;
  art += `<rect x="${x}" y="${y}" width="${s * .5}" height="${s}" transform="rotate(${(x - 23) * 2.5} ${x} ${y})" fill="${colors[Math.floor(rnd() * 12)]}" opacity="${1 - r * .5}"/>`;
}
art += '<path d="M3 29q12-2 18 8 6-7 19-7l-2 5q-9-1-17 3-7-4-16-4z" fill="#182a3b"/><path d="M5 28q12 0 16 10M6 31q9 0 13 7" stroke="#d98a4a" stroke-width="1.200" fill="none"/><path d="M23 37q5-5 15-5" stroke="#6fa0b8" stroke-width=".8" fill="none"/>';
document.getElementById('logo').innerHTML = art;
</script>
</body>
</html>
